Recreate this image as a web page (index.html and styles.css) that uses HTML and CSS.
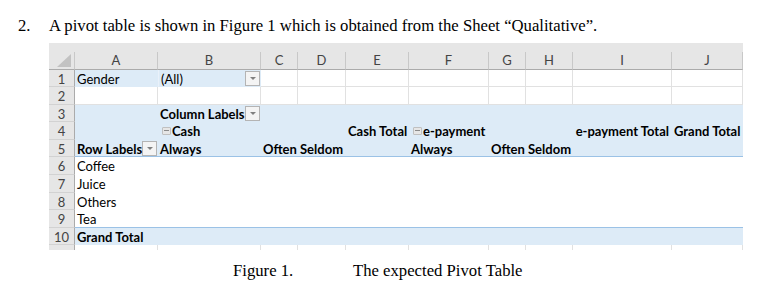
FILE: index.html
```html
<!DOCTYPE html>
<html>
<head>
<meta charset="utf-8">
<link rel="stylesheet" href="styles.css">
</head>
<body>
<p class="q"><span class="num">2.</span><span class="qt">A pivot table is shown in Figure 1 which is obtained from the Sheet “Qualitative”.</span></p>
<div class="sheet">
  <div class="strip"></div>
  <div class="grid">
    <div class="corner"><span class="tri"></span></div>
    <div class="ch">A</div><div class="ch">B</div><div class="ch">C</div><div class="ch">D</div><div class="ch">E</div><div class="ch">F</div><div class="ch">G</div><div class="ch">H</div><div class="ch">I</div><div class="ch">J</div>

    <div class="rh">1</div>
    <div class="b">Gender</div><div class="b sep dd-cell">(All)<span class="dd"></span></div>
    <div class="w"></div><div class="w"></div><div class="w"></div><div class="w"></div><div class="w"></div><div class="w"></div><div class="w"></div><div class="w"></div>

    <div class="rh">2</div>
    <div class="w"></div><div class="w"></div><div class="w"></div><div class="w"></div><div class="w"></div><div class="w"></div><div class="w"></div><div class="w"></div><div class="w"></div><div class="w"></div>

    <div class="rh">3</div>
    <div class="b"></div><div class="b bold dd-cell">Column Labels<span class="dd"></span></div>
    <div class="b"></div><div class="b"></div><div class="b"></div><div class="b"></div><div class="b"></div><div class="b"></div><div class="b"></div><div class="b"></div>

    <div class="rh">4</div>
    <div class="b"></div><div class="b bold ind"><span class="col"></span>Cash</div>
    <div class="b"></div><div class="b"></div><div class="b bold r">Cash Total</div><div class="b bold ind"><span class="col"></span>e-payment</div>
    <div class="b"></div><div class="b"></div><div class="b bold r">e-payment Total</div><div class="b bold r">Grand Total</div>

    <div class="rh">5</div>
    <div class="b bl bold dd-cell">Row Labels<span class="dd"></span></div><div class="b bl bold">Always</div><div class="b bl bold r">Often</div><div class="b bl bold r">Seldom</div><div class="b bl"></div><div class="b bl bold">Always</div><div class="b bl bold r">Often</div><div class="b bl bold r">Seldom</div><div class="b bl"></div><div class="b bl"></div>

    <div class="rh">6</div>
    <div class="n">Coffee</div><div class="n"></div><div class="n"></div><div class="n"></div><div class="n"></div><div class="n"></div><div class="n"></div><div class="n"></div><div class="n"></div><div class="n"></div>

    <div class="rh">7</div>
    <div class="n">Juice</div><div class="n"></div><div class="n"></div><div class="n"></div><div class="n"></div><div class="n"></div><div class="n"></div><div class="n"></div><div class="n"></div><div class="n"></div>

    <div class="rh">8</div>
    <div class="n">Others</div><div class="n"></div><div class="n"></div><div class="n"></div><div class="n"></div><div class="n"></div><div class="n"></div><div class="n"></div><div class="n"></div><div class="n"></div>

    <div class="rh">9</div>
    <div class="n bl">Tea</div><div class="n bl"></div><div class="n bl"></div><div class="n bl"></div><div class="n bl"></div><div class="n bl"></div><div class="n bl"></div><div class="n bl"></div><div class="n bl"></div><div class="n bl"></div>

    <div class="rh">10</div>
    <div class="b bold">Grand Total</div><div class="b"></div><div class="b"></div><div class="b"></div><div class="b"></div><div class="b"></div><div class="b"></div><div class="b"></div><div class="b"></div><div class="b"></div>

    <div class="rh last"></div>
    <div class="w last"></div><div class="w last"></div><div class="w last"></div><div class="w last"></div><div class="w last"></div><div class="w last"></div><div class="w last"></div><div class="w last"></div><div class="w last"></div><div class="w last"></div>
  </div>
</div>
<p class="cap"><span class="fig">Figure 1.</span><span>The expected Pivot Table</span></p>
</body>
</html>
```
FILE: styles.css
```css
html, body { margin: 0; padding: 0; background: #fff; }
body { font-family: "Liberation Serif", "Times New Roman", serif; font-size: 16.7px; color: #000; }

.q { margin: 0; padding-top: 17px; height: 18px; line-height: 18px; display: flex; white-space: nowrap; }
.num { display: inline-block; width: 31px; padding-left: 18px; }

.sheet { margin: 8px 0 0 49px; width: 694px; font-family: Lato, "Open Sans", sans-serif; font-size: 13px; }
.strip { height: 9px; background: #e6e6e6; }

.grid {
  display: grid;
  grid-template-columns: 26px 83px 103px 37px 48px 63px 80px 37px 47px 99px 71px;
  grid-template-rows: 17.5px repeat(10, 17.6px) 4.5px;
}
.grid > div { box-sizing: border-box; white-space: nowrap; line-height: 17px; padding-top: 1px; overflow: visible; position: relative; }

.corner { background: #e6e6e6; border-right: 1px solid #c8c8c8; border-bottom: 1px solid #ababab; }
.tri { position: absolute; right: 3px; bottom: 2px; width: 0; height: 0; border-left: 14px solid transparent; border-bottom: 13px solid #c2c2c2; }

.ch { background: #e6e6e6; color: #444; text-align: center; border-right: 1px solid #c8c8c8; border-bottom: 1px solid #ababab; }
.grid > .ch { padding-top: 0; }
.rh { background: #e6e6e6; color: #444; text-align: center; border-right: 1px solid #ababab; border-bottom: 1px solid #d2d2d2; }

.w { background: #fff; border-right: 1px solid #e1e1e1; border-bottom: 1px solid #e1e1e1; padding-left: 2px; }
.b { background: #ddebf7; border-bottom: 1px solid #ddebf7; padding-left: 2px; }
.n { background: #fff; border-bottom: 1px solid #fff; padding-left: 2px; }
.bl { border-bottom: 1px solid #9bc2e6; }
.sep { border-left: 1px solid #e9f1fa; }
.last { border-bottom: none; }

.bold { font-weight: bold; }
.r { text-align: right; padding-right: 3px; }
.ind { padding-left: 4px; display: flex; align-items: center; }

.dd-cell { padding-right: 18px; }
.dd {
  position: absolute; right: 1px; top: 1px;
  width: 15px; height: 15px; box-sizing: border-box;
  border: 1px solid #b4b4b4; background: #f4f4f4;
}
.dd::after {
  content: ""; position: absolute; left: 4px; top: 5px;
  border-left: 3px solid transparent; border-right: 3px solid transparent; border-top: 3px solid #808080;
}

.col {
  display: inline-block; width: 9px; height: 8px; box-sizing: border-box; margin-right: 1px;
  border: 1px solid #c0c0c0; background: #e6e6e6; position: relative; border-radius: 1px;
}
.col::after { content: ""; position: absolute; left: 1px; right: 1px; top: 2px; height: 1px; background: #8a8a8a; }

.cap { margin: 12px 0 0 0; padding-left: 233px; line-height: 18px; display: flex; white-space: nowrap; }
.fig { display: inline-block; width: 120px; }
```
